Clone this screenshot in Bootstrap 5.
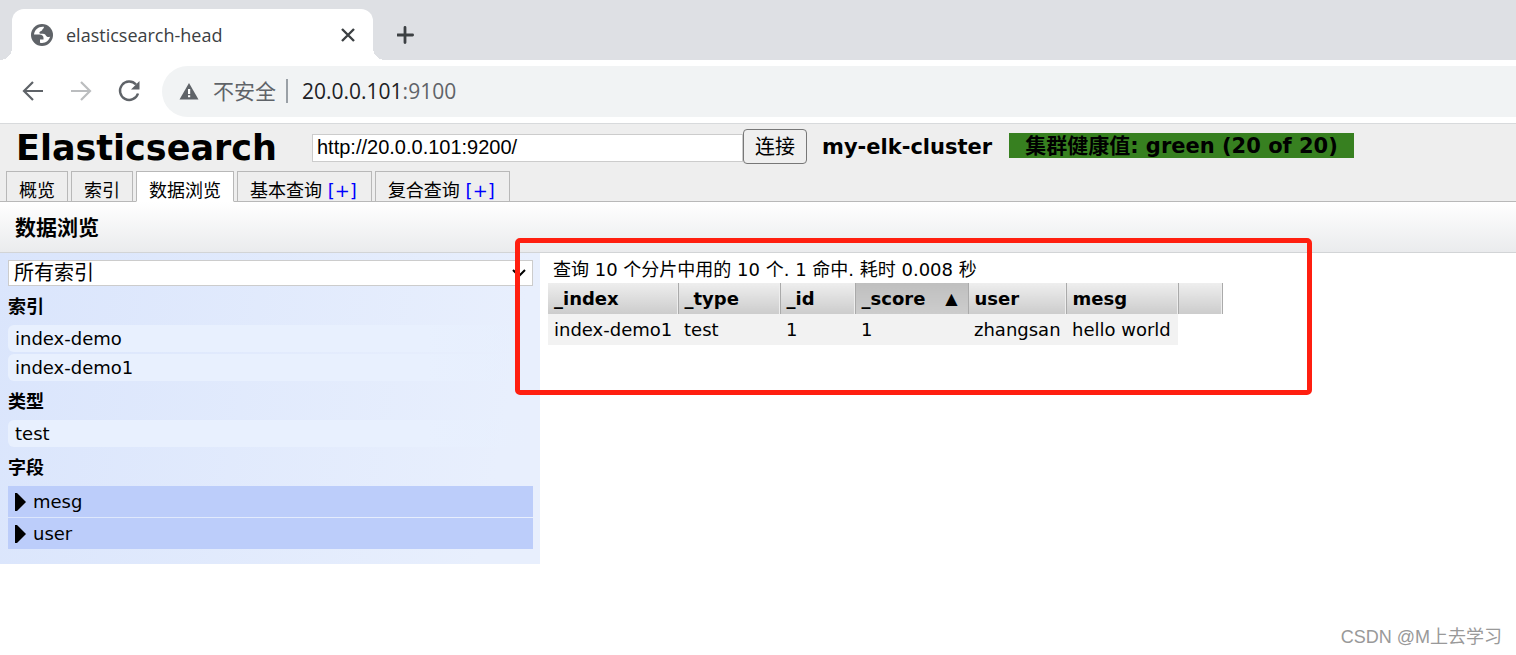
<!DOCTYPE html>
<html lang="zh-CN">
<head>
<meta charset="utf-8">
<meta name="viewport" content="width=device-width, initial-scale=1">
<title>elasticsearch-head</title>
<link href="https://cdn.jsdelivr.net/npm/bootstrap@5.3.0/dist/css/bootstrap.min.css" rel="stylesheet">
<style>
body { font-family: "DejaVu Sans", "Noto Sans CJK SC", sans-serif; font-size: 18px; line-height: 24px; color: #000; background: #fff; }
button { color: inherit; }

/* browser chrome */
.chrome-ui { font-family: "Open Sans", "Noto Sans CJK SC", sans-serif; border-bottom: 1px solid #d8dadc; }
.tab-strip { background: #dee0e4; height: 60px; padding: 9px 0 0 12px; }
.page-tab { width: 361px; padding: 0 17px 0 19px; gap: 13px; background: #fff; border-radius: 12px 12px 0 0; color: #3c4043; position: relative; }
.page-tab::before, .page-tab::after { content: ""; position: absolute; bottom: 0; width: 12px; height: 12px; }
.page-tab::before { left: -12px; background: radial-gradient(circle at 0 0, transparent 12px, #fff 12px); }
.page-tab::after { right: -12px; background: radial-gradient(circle at 100% 0, transparent 12px, #fff 12px); }
.bare { border: 0; background: none; padding: 0; display: flex; }
.tools { height: 63px; padding-left: 20px; gap: 20px; color: #5f6368; }
.nav-buttons { gap: 22px; }
.address { height: 51px; background: #f1f3f4; border-radius: 26px 0 0 26px; padding-left: 17px; gap: 14px; font-size: 21px; line-height: 30px; padding-bottom: 1px; }
.address .host { color: #202124; }
.address .sep { width: 2px; height: 24px; background: #9aa0a6; margin-left: -4px; }

/* application header */
.app-head { background: #eee; border-bottom: 1px solid #b8b8b8; }
.head-row { padding: 5px 0 7px 16px; }
.brand-title { font-size: 35px; line-height: 31px; padding-top: 4px; width: 296px; font-weight: 700; }
.uri { width: 431px; height: 28px; border: 1px solid #ccc; padding: 0 4px; margin-top: 2px; font: 20px "Liberation Sans", sans-serif; color: #000; background: #fff; }
.connect { width: 64px; height: 35px; border: 1px solid #777; border-radius: 4px; background: #efefef; font-size: 20px; padding: 0; }
.cluster { font-size: 21px; font-weight: 700; margin-left: 15px; }
.health { font-size: 21px; line-height: 27px; height: 25px; font-weight: 700; background: #378020; padding: 0 16px; margin: 0 0 2px 17px; }
.app-tabs { padding-left: 6px; gap: 3px; margin-bottom: -1px; }
.app-tab { height: 31px; border: 1px solid #b8b8b8; background: #eee; padding: 7px 12px 0; line-height: 23px; color: #000; }
.app-tab.current { background: #fff; border-bottom-color: #fff; }
.app-tab.has-menu { padding-right: 14px; }
.app-tab a { color: #00f; text-decoration: none; }
.section-bar { background: linear-gradient(#fff, #eaebed); border-bottom: 1px solid #d2d4d6; padding: 14px 15px 12px; }
.section-bar h2 { font-size: 21px; line-height: 24px; font-weight: 700; margin: 0; }

/* filter panel */
.filters { width: 540px; padding: 7px 7px 15px 8px; background: linear-gradient(100deg, #dae5fc, #e8effd 90%); }
.index-pick { width: 100%; height: 26px; border: 1px solid #ccc; appearance: none; padding: 1px 5px 0; font-size: 20px; line-height: 23px; color: #000;
  background: #fff url("data:image/svg+xml,%3Csvg xmlns='http://www.w3.org/2000/svg' width='14' height='9' fill='none' stroke='black' stroke-width='2'%3E%3Cpath d='M1 1l6 6 6-6'/%3E%3C/svg%3E") no-repeat right 6px center; }
.filters h3 { font-size: 18px; line-height: 24px; font-weight: 700; margin: 0; padding: 9px 0 6px; }
.pick { width: 100%; height: 27px; line-height: 28px; border-radius: 6px; padding: 0 7px; margin-bottom: 2px; text-align: left; background: linear-gradient(90deg, #e8f0fe 80%, #e8f0fe00); }
.pick:last-child { margin-bottom: 0; }
.field-row { width: 100%; height: 31px; background: #bccdfa; padding: 0 7px; gap: 7px; align-items: center; margin-bottom: 1px; }

/* results */
.results { padding: 4px 8px; }
.summary { padding-left: 5px; line-height: 26px; margin: 0; }
.hits { table-layout: fixed; width: 674px; border-collapse: collapse; }
.hits th, .hits td { height: 31px; padding: 0 6px; white-space: nowrap; }
.hits th { background: linear-gradient(#eee, #ccc); border-right: 1px solid #aaa; box-shadow: inset -1px 0 #eee; }
.hits th.sorted { background: linear-gradient(#bfbfbf, #ccc); box-shadow: none; padding-right: 10px; }
.hits th small { font-size: 16px; }
.hits td { background: #f2f2f2; }
.hits td:empty { background: none; }
.callout-box { left: -25px; top: -15px; width: 797px; height: 157px; border: 5px solid #ff1f10; border-radius: 5px; pointer-events: none; }
.watermark { right: 14px; bottom: 6px; font-family: "Liberation Sans", "Noto Sans CJK SC", sans-serif; color: #999; }
</style>
</head>
<body>
<div class="min-vh-100 position-relative">
<header class="chrome-ui">
  <div class="tab-strip d-flex">
    <div class="page-tab d-flex align-items-center">
      <svg width="22" height="22" viewBox="0 0 22 22" aria-hidden="true"><circle cx="11" cy="11" r="11" fill="#5f6368"/><path fill="#fff" d="M13 2.800C8 2 3.500 5.500 3 10.500h5.500c2.500 0 4 1.300 4 3.500v1.500H9v3.200c4.500 1.200 9-1.700 10.200-6.200-1.300 1-3.200.8-4.200-.8-.8-1.200-1.300-1.900-3-1.900H9.500c-1.300-.1-1.500-1.800-.3-2.400L11 6.500c.3-1.500 2-1.500 2-3.700z"/></svg>
      <span class="flex-grow-1 lh-1">elasticsearch-head</span>
      <button class="bare" aria-label="关闭标签页"><svg width="16" height="16" viewBox="0 0 16 16" fill="none" stroke="#3c4043" stroke-width="2.400"><path d="M2 2l12 12M14 2L2 14"/></svg></button>
    </div>
    <button class="bare align-items-center ms-4" aria-label="新标签页"><svg width="18" height="50" viewBox="0 0 18 50" fill="none" stroke="#3c4043" stroke-width="2.800" stroke-linecap="round"><path d="M8 17.400v15.200M.4 25h15.200"/></svg></button>
  </div>
  <nav class="tools d-flex align-items-center" aria-label="浏览器">
    <div class="nav-buttons d-flex">
      <button class="bare" aria-label="后退"><svg width="26" height="26" viewBox="0 1 26 26" fill="none" stroke="#5f6368" stroke-width="2.200"><path d="M23 13H4.500M13 4l-9 9 9 9"/></svg></button>
      <button class="bare" aria-label="前进"><svg width="26" height="26" viewBox="0 1 26 26" fill="none" stroke="#bbbdbf" stroke-width="2.200"><path d="M3 13h18.500M13 4l9 9-9 9"/></svg></button>
      <button class="bare" aria-label="重新加载"><svg width="26" height="26" viewBox="0 1 26 26" fill="none" stroke="#5f6368" stroke-width="2.400"><path d="M20 6.500A9.200 9.200 0 1 0 22 15.500"/><path fill="#5f6368" stroke="none" d="M23.500 3v8.500H15z"/></svg></button>
    </div>
    <div class="address d-flex align-items-center flex-grow-1">
      <svg width="20" height="18" viewBox="0 0 20 18" aria-hidden="true"><path fill="#5f6368" d="M10 1l9.500 16.500H.5z"/><path fill="#fff" d="M9 7h2.200v5H9zM9 13.300h2.200v2H9z"/></svg>
      <span>不安全</span><span class="sep"></span><span><span class="host">20.0.0.101</span>:9100</span>
    </div>
  </nav>
</header>

<div class="app-head">
  <div class="head-row d-flex align-items-center">
    <h1 class="brand-title mb-0">Elasticsearch</h1>
    <input class="uri rounded-0" type="text" value="http://20.0.0.101:9200/" aria-label="集群地址">
    <button class="connect">连接</button>
    <span class="cluster">my-elk-cluster</span>
    <span class="health">集群健康值: green (20 of 20)</span>
  </div>
  <nav class="app-tabs d-flex" aria-label="功能">
    <button class="app-tab">概览</button>
    <button class="app-tab">索引</button>
    <button class="app-tab current">数据浏览</button>
    <div class="app-tab has-menu">基本查询 <a href="#">[+]</a></div>
    <div class="app-tab has-menu">复合查询 <a href="#">[+]</a></div>
  </nav>
</div>
<div class="section-bar"><h2>数据浏览</h2></div>

<main class="d-flex align-items-start">
  <aside class="filters flex-shrink-0">
    <select class="index-pick rounded-0 d-block" aria-label="选择索引"><option>所有索引</option></select>
    <h3>索引</h3>
    <div><button class="bare pick">index-demo</button><button class="bare pick">index-demo1</button></div>
    <h3>类型</h3>
    <div><button class="bare pick">test</button></div>
    <h3>字段</h3>
    <button class="bare field-row"><svg width="11" height="20" viewBox="0 0 11 20" aria-hidden="true"><path d="M0 1h2l9 9-9 9H0z"/></svg>mesg</button>
    <button class="bare field-row mb-0"><svg width="11" height="20" viewBox="0 0 11 20" aria-hidden="true"><path d="M0 1h2l9 9-9 9H0z"/></svg>user</button>
  </aside>
  <section class="results position-relative flex-grow-1">
    <p class="summary">查询 10 个分片中用的 10 个. 1 命中. 耗时 0.008 秒</p>
    <table class="hits">
      <colgroup><col style="width:130px"><col style="width:102px"><col style="width:75px"><col style="width:113px"><col style="width:98px"><col style="width:112px"><col style="width:44px"></colgroup>
      <thead><tr><th>_index</th><th>_type</th><th>_id</th><th class="sorted"><span class="d-flex justify-content-between">_score <small class="fw-bold">▲</small></span></th><th>user</th><th>mesg</th><th></th></tr></thead>
      <tbody><tr><td>index-demo1</td><td>test</td><td>1</td><td>1</td><td>zhangsan</td><td>hello world</td><td></td></tr></tbody>
    </table>
    <div class="callout-box position-absolute"></div>
  </section>
</main>
<div class="watermark position-absolute">CSDN @M上去学习</div>
</div>
<script src="https://cdn.jsdelivr.net/npm/bootstrap@5.3.0/dist/js/bootstrap.bundle.min.js"></script>
</body>
</html>
